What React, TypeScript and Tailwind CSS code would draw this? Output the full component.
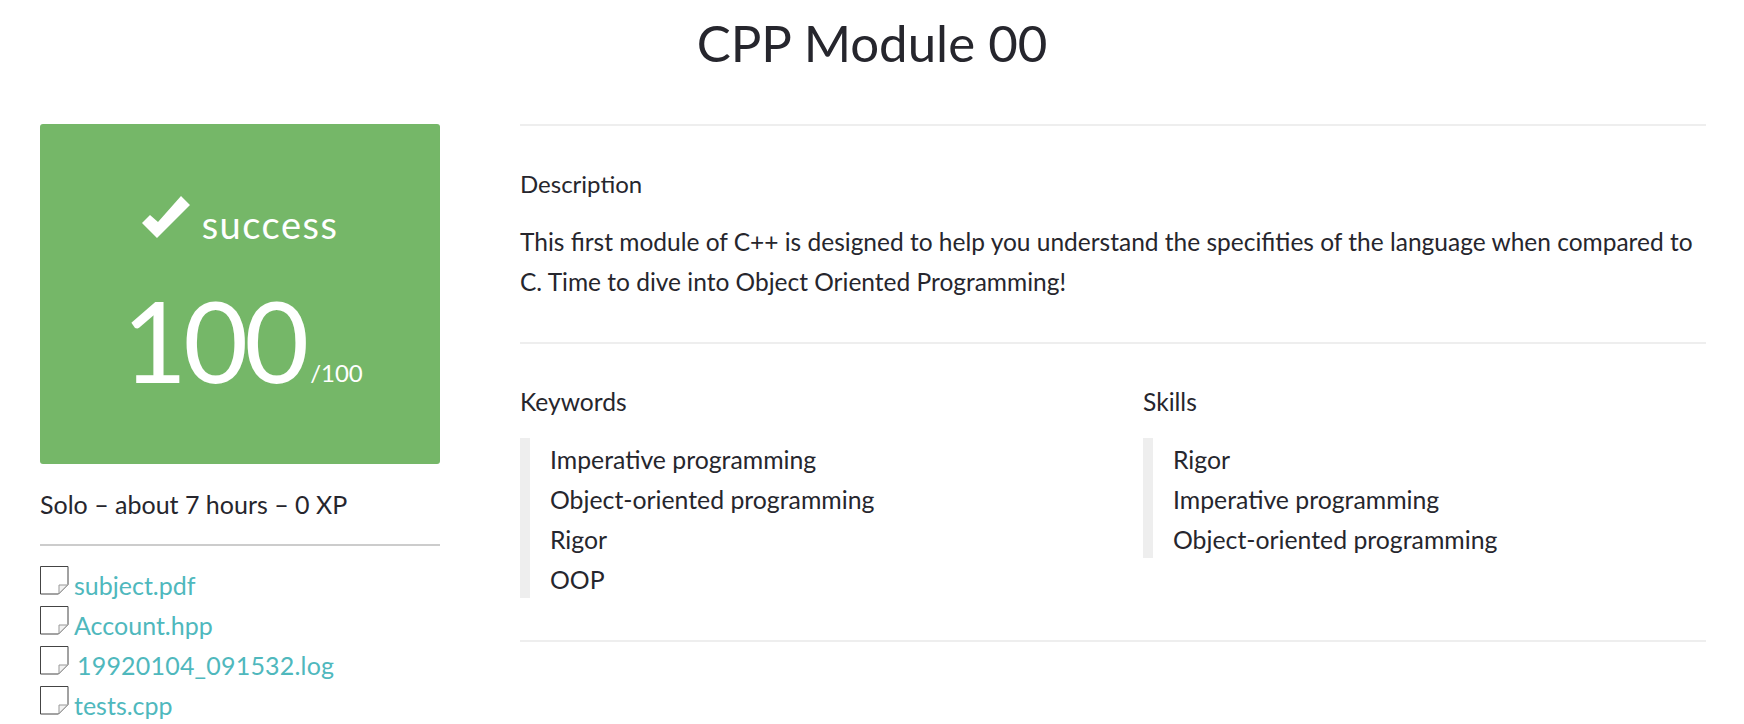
import React from 'react';

const keywords = ['Imperative programming', 'Object-oriented programming', 'Rigor', 'OOP'];
const skills = ['Rigor', 'Imperative programming', 'Object-oriented programming'];
const files = [
  { name: 'subject.pdf', className: '' },
  { name: 'Account.hpp', className: '' },
  { name: '19920104_091532.log', className: 'ml-[3px] tracking-[0.2px]' },
  { name: 'tests.cpp', className: '' },
];

function FileIcon() {
  return (
    <svg width="29" height="29" viewBox="0 0 29 29" className="shrink-0">
      <path d="M0.5 0.5H28V18.5L18.5 28H0.5Z" fill="#fff" stroke="#444" strokeWidth="1" />
      <path d="M19 27.5V19H27.5Z" fill="#f2f2f2" stroke="#999" strokeWidth="1" />
    </svg>
  );
}

function TagList({ title, items }: { title: string; items: string[] }) {
  return (
    <div>
      <h4 className="text-[24.6px] leading-[40px] font-normal">{title}</h4>
      <ul className="mt-[16px] border-l-[10px] border-[#eeeeee] pl-[20px] text-[24.8px]">
        {items.map((item) => (
          <li key={item} className="leading-[40px] pt-[2px] h-[40px]">{item}</li>
        ))}
      </ul>
    </div>
  );
}

export default function App() {
  return (
    <div className="w-[1744px] h-[724px] overflow-hidden bg-white text-[#26262d] text-[24px] font-['Lato',sans-serif]">
      <h1 className="h-[124px] pt-[11px] text-center text-[51px] leading-[64px] font-normal">CPP Module 00</h1>
      <div className="flex pl-[40px] pr-[38px] gap-[80px]">
        <aside className="w-[400px] shrink-0">
          <div className="h-[340px] rounded-[3px] bg-[#75b768] text-white flex flex-col items-center pt-[72px]">
            <div className="flex items-end gap-[12px] h-[50px]">
              <svg width="48" height="42" viewBox="0 0 48 42" className="mb-[8px]">
                <path d="M0 27L8 19L16 26L39 0L48 9L15 42Z" fill="#fff" />
              </svg>
              <span className="text-[38px] leading-[44px] tracking-[1.5px]">success</span>
            </div>
            <div className="flex items-end mt-[39px] pl-[5px]">
              <span className="text-[112px] leading-[110px] font-normal tracking-[-4px]">100</span>
              <span className="text-[24px] leading-[30px] mb-[7px] ml-[5px]">/100</span>
            </div>
          </div>
          <p className="mt-[20px] leading-[40px] text-[25px]">Solo – about 7 hours – 0 XP</p>
          <div className="mt-[20px] border-t-2 border-[#cccccc]" />
          <ul className="mt-[20px]">
            {files.map((f) => (
              <li key={f.name} className="flex h-[40px] items-start gap-[5px]">
                <FileIcon />
                <span className={`text-[#4fb8bd] text-[25px] leading-[40px] mt-[-1px] ${f.className}`}>{f.name}</span>
              </li>
            ))}
          </ul>
        </aside>
        <main className="flex-1">
          <section className="border-t-2 border-[#eeeeee] pt-[38px] pb-[40px]">
            <h4 className="leading-[40px] font-normal">Description</h4>
            <p className="mt-[18px] leading-[40px] text-[24.5px]">
              This first module of C++ is designed to help you understand the specifities of the language when compared to C. Time to dive into Object Oriented Programming!
            </p>
          </section>
          <section className="border-t-2 border-[#eeeeee] grid grid-cols-[623px_1fr] pt-[38px] pb-[42px]">
            <TagList title="Keywords" items={keywords} />
            <TagList title="Skills" items={skills} />
          </section>
          <div className="border-t-2 border-[#eeeeee]" />
        </main>
      </div>
    </div>
  );
}
